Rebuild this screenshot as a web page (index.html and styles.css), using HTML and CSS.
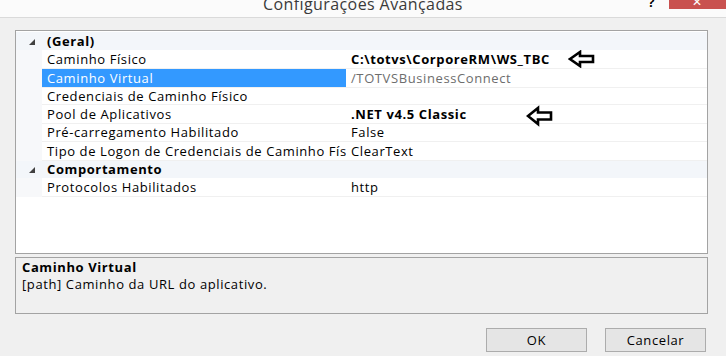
FILE: index.html
```html
<!DOCTYPE html>
<html lang="pt">
<head>
    <meta charset="UTF-8">
    <title>Configurações Avançadas</title>
    <link rel="stylesheet" href="styles.css">
</head>
<body>
    <div class="titlebar">
        <div></div>
        <div class="title">Configurações Avançadas</div>
        <div class="controls">
            <span class="help">?</span>
            <span class="close">&#x2715;</span>
        </div>
    </div>

    <div class="content">
        <div class="propgrid">
            <div class="row category">
                <span class="toggle"></span>
                <span class="label">(Geral)</span>
                <span class="value"></span>
            </div>
            <div class="row">
                <span class="gutter"></span>
                <span class="label">Caminho Físico</span>
                <span class="value bold">C:\totvs\CorporeRM\WS_TBC
                    <svg class="arrow arrow-top" width="28" height="18" viewBox="0 0 28 18"><path d="M2 9 L12 2 L12 6 L25 6 L25 12 L12 12 L12 16 Z" fill="#fff" stroke="#000" stroke-width="2.6"/></svg>
                </span>
            </div>
            <div class="row selected">
                <span class="gutter"></span>
                <span class="label">Caminho Virtual</span>
                <span class="value muted">/TOTVSBusinessConnect</span>
            </div>
            <div class="row">
                <span class="gutter"></span>
                <span class="label">Credenciais de Caminho Físico</span>
                <span class="value"></span>
            </div>
            <div class="row">
                <span class="gutter"></span>
                <span class="label">Pool de Aplicativos</span>
                <span class="value bold">.NET v4.5 Classic
                    <svg class="arrow arrow-low" width="28" height="22" viewBox="0 0 28 22"><path d="M2 11 L12 3 L12 7.5 L25 7.5 L25 14.5 L12 14.5 L12 19 Z" fill="#fff" stroke="#000" stroke-width="2.6"/></svg>
                </span>
            </div>
            <div class="row">
                <span class="gutter"></span>
                <span class="label">Pré-carregamento Habilitado</span>
                <span class="value">False</span>
            </div>
            <div class="row">
                <span class="gutter"></span>
                <span class="label">Tipo de Logon de Credenciais de Caminho Físico</span>
                <span class="value">ClearText</span>
            </div>
            <div class="row category">
                <span class="toggle"></span>
                <span class="label">Comportamento</span>
                <span class="value"></span>
            </div>
            <div class="row">
                <span class="gutter"></span>
                <span class="label">Protocolos Habilitados</span>
                <span class="value">http</span>
            </div>
        </div>

        <div class="description">
            <div class="desc-title">Caminho Virtual</div>
            <div class="desc-text">[path] Caminho da URL do aplicativo.</div>
        </div>

        <div class="buttons">
            <button>OK</button>
            <button>Cancelar</button>
        </div>
    </div>
</body>
</html>
```

FILE: styles.css
```css
* {
    margin: 0;
    padding: 0;
    box-sizing: border-box;
}

body {
    width: 726px;
    height: 356px;
    overflow: hidden;
    background-color: #f0f0f0;
    font-family: "Open Sans", "Noto Sans", sans-serif;
    font-size: 13px;
    letter-spacing: 0.6px;
    color: #000;
}

.titlebar {
    height: 18px;
    background-color: #fbfbfb;
    border-bottom: 1px solid #dadada;
    display: grid;
    grid-template-columns: 1fr auto 1fr;
    overflow: hidden;
}

.title {
    font-size: 16px;
    color: #3a3a3a;
    line-height: 16px;
    margin-top: -4px;
    letter-spacing: 0.4px;
}

.controls {
    display: flex;
    justify-content: flex-end;
    align-items: flex-start;
}

.help {
    font-size: 13px;
    line-height: 13px;
    margin-top: -4px;
    margin-right: 14px;
    font-weight: bold;
}

.close {
    width: 57px;
    height: 9px;
    background-color: #c9514f;
    color: #fff;
    font-size: 12px;
    line-height: 4px;
    text-align: center;
    overflow: hidden;
}

.content {
    padding: 12px 18px 0 15px;
}

.propgrid {
    height: 224px;
    padding-top: 1px;
    background-color: #fff;
    border: 1px solid #a3a3a3;
}

.row {
    display: grid;
    grid-template-columns: 26px 304px 1fr;
    height: 18.25px;
    line-height: 17px;
}

.row .label,
.row .value {
    padding-top: 1px;
    border-bottom: 1px solid #f0f0f0;
    white-space: nowrap;
    overflow: hidden;
}

.row .label {
    padding-left: 5px;
}

.row .value {
    padding-left: 5px;
    position: relative;
    overflow: visible;
}

.gutter {
    background-color: #f7f8fa;
}

.category {
    background-color: #f3f6fa;
    font-weight: bold;
}

.category .label,
.category .value {
    border-bottom: none;
}

.toggle {
    position: relative;
}

.toggle::after {
    content: "";
    position: absolute;
    left: 13px;
    top: 7px;
    border-left: 6px solid transparent;
    border-bottom: 6px solid #404040;
}

.selected .label {
    background-color: #3399ff;
    color: #fff;
}

.muted {
    color: #6d6d6d;
}

.bold {
    font-weight: bold;
}

.arrow {
    position: absolute;
}

.arrow-top {
    left: 222px;
    top: 0;
}

.arrow-low {
    left: 180px;
    top: 0;
}

.description {
    margin-top: 3px;
    height: 57px;
    border: 1px solid #a3a3a3;
    padding: 1px 6px;
    line-height: 17px;
}

.desc-title {
    font-weight: bold;
}

.buttons {
    margin-top: 14px;
    display: flex;
    justify-content: flex-end;
    gap: 18px;
    padding-right: 2px;
}

button {
    width: 101px;
    height: 24px;
    font-family: "Open Sans", "Noto Sans", sans-serif;
    font-size: 13px;
    letter-spacing: 0.6px;
    background-color: #e5e5e5;
    border: 1px solid #acacac;
    color: #000;
}
```
